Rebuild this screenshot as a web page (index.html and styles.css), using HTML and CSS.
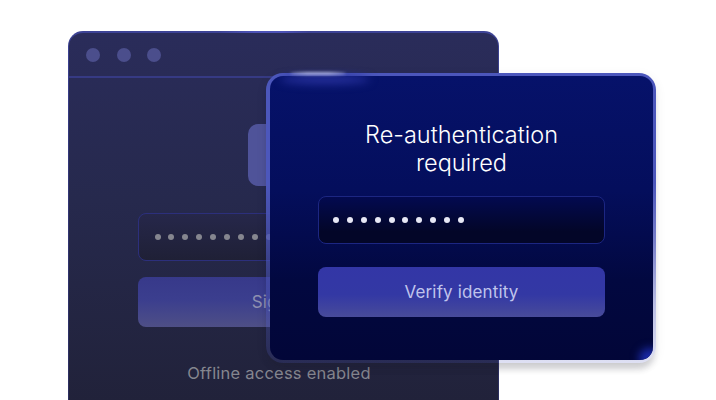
FILE: index.html
```html
<!DOCTYPE html>
<html lang="en">
<head>
<meta charset="utf-8">
<title>Re-authentication required</title>
<link rel="stylesheet" href="styles.css">
</head>
<body>
<main class="scene">
  <section class="window">
    <span class="window-glint"></span>
    <header class="titlebar">
      <span class="light"></span><span class="light"></span><span class="light"></span>
    </header>
    <div class="window-body">
      <div class="logo-tile"></div>
      <div class="field back-field">
        <span class="dot"></span><span class="dot"></span><span class="dot"></span><span class="dot"></span><span class="dot"></span><span class="dot"></span><span class="dot"></span><span class="dot"></span><span class="dot"></span><span class="dot"></span>
      </div>
      <div class="btn back-btn">Sign in</div>
      <p class="offline">Offline access enabled</p>
    </div>
  </section>
  <section class="card">
    <span class="glow"></span>
    <span class="glint"></span>
    <div class="card-inner">
      <h1 class="title">Re-authentication<br>required</h1>
      <div class="field card-field">
        <span class="dot"></span><span class="dot"></span><span class="dot"></span><span class="dot"></span><span class="dot"></span><span class="dot"></span><span class="dot"></span><span class="dot"></span><span class="dot"></span><span class="dot"></span>
      </div>
      <div class="btn card-btn">Verify identity</div>
      <span class="corner"></span>
    </div>
  </section>
</main>
</body>
</html>
```
FILE: styles.css
```css
html, body { margin: 0; padding: 0; background: #fff; }
body { font-family: Inter, "Liberation Sans", sans-serif; }
.scene { position: relative; width: 716px; height: 400px; overflow: hidden; background: #fff; }

.window {
  position: absolute; left: 68px; top: 31px; width: 431px; height: 420px;
  box-sizing: border-box; border-radius: 15px 15px 0 0;
  border: 1px solid transparent; border-top-width: 2px; border-bottom: 0;
  background:
    linear-gradient(180deg, #2a2c5a 0%, #26294d 40%, #21223a 88%) padding-box,
    linear-gradient(180deg, #3d4396 0%, #34387c 25%, #2a2c58 100%) border-box;
  display: flex; flex-direction: column;
}
.window-glint {
  position: absolute; left: 150px; top: -2px; width: 90px; height: 2px;
  background: linear-gradient(90deg, transparent, #4d53b8 40%, #4d53b8 70%, transparent);
}
.titlebar {
  height: 45px; flex: none; box-sizing: border-box; padding: 0 0 0 17px;
  display: flex; align-items: center; gap: 16.5px;
  border-bottom: 2px solid #363a84;
}
.light { width: 14px; height: 14px; border-radius: 50%; background: #4b4e8c; }
.window-body { display: flex; flex-direction: column; align-items: center; padding-top: 46px; }
.logo-tile { width: 72px; height: 62px; border-radius: 10px; background: #4f5399; margin-bottom: 27px; }

.field {
  box-sizing: border-box; display: flex; align-items: center; gap: 7.89px;
  border-radius: 8px; border: 1px solid #2c2f7c; padding-left: 16px;
}
.dot { width: 6px; height: 6px; border-radius: 50%; flex: none; }
.back-field { width: 292px; height: 48px; margin-bottom: 16px; background: linear-gradient(180deg, #26274a, #1f2036); }
.back-field .dot { background: #85868f; }
.btn { display: flex; align-items: center; justify-content: center; border-radius: 8px; font-size: 17px; letter-spacing: .15px; box-sizing: border-box; }
.back-btn { width: 292px; height: 50px; padding-right: 8px; color: #8e90b0; background: linear-gradient(180deg, #37398a 0%, #3b3e8e 45%, #4e4f86 100%); }
.offline { margin: 36px 0 0; padding-right: 9px; font-size: 16.5px; letter-spacing: .23px; line-height: 20px; color: #85868f; }

.card {
  position: absolute; left: 266px; top: 73px; width: 390px; height: 290px;
  box-sizing: border-box; padding: 3px 3px 3px 4px; border-radius: 17px;
  background: linear-gradient(180deg, #4c57bc 0%, #4c57bc 38%, rgba(74, 84, 184, .75) 58%, rgba(74, 84, 184, .38) 80%, rgba(74, 84, 190, .18) 100%);
  box-shadow: 0 8px 6px -2px rgba(30, 30, 40, .18), 0 3px 12px rgba(30, 30, 50, .07);
}
.glint {
  position: absolute; left: 24px; top: -1px; width: 56px; height: 3px; border-radius: 50%;
  background: #a9aed6; filter: blur(1.5px); z-index: 2;
}
.glow {
  position: absolute; left: 14px; top: 2px; width: 90px; height: 9px; border-radius: 50%;
  background: #26309c; filter: blur(4px); z-index: 2;
}
.card-inner {
  position: relative; height: 100%; box-sizing: border-box; border-radius: 13px; overflow: hidden;
  background: linear-gradient(180deg, #06126a 0%, #040e5c 40%, #020840 72%, #020638 100%);
  display: flex; flex-direction: column; align-items: center; padding-top: 45px;
}
.corner {
  position: absolute; right: -8px; bottom: -8px; width: 22px; height: 20px; border-radius: 50%;
  background: #1a2aa8; filter: blur(4px);
}
.title { margin: 0 0 19px; font-size: 23.5px; line-height: 28px; font-weight: 300; color: #fff; text-align: center; }
.card-field { width: 287px; height: 48px; margin-bottom: 23px; padding-left: 14px; background: linear-gradient(180deg, #030a50, #030628 75%); border-color: #1c2682; }
.card-field .dot { background: #e7e8f5; }
.card-btn { width: 287px; height: 50px; color: #c0c4ec; background: linear-gradient(180deg, #3336a6 0%, #3338a4 55%, #484b9a 100%); }
```
